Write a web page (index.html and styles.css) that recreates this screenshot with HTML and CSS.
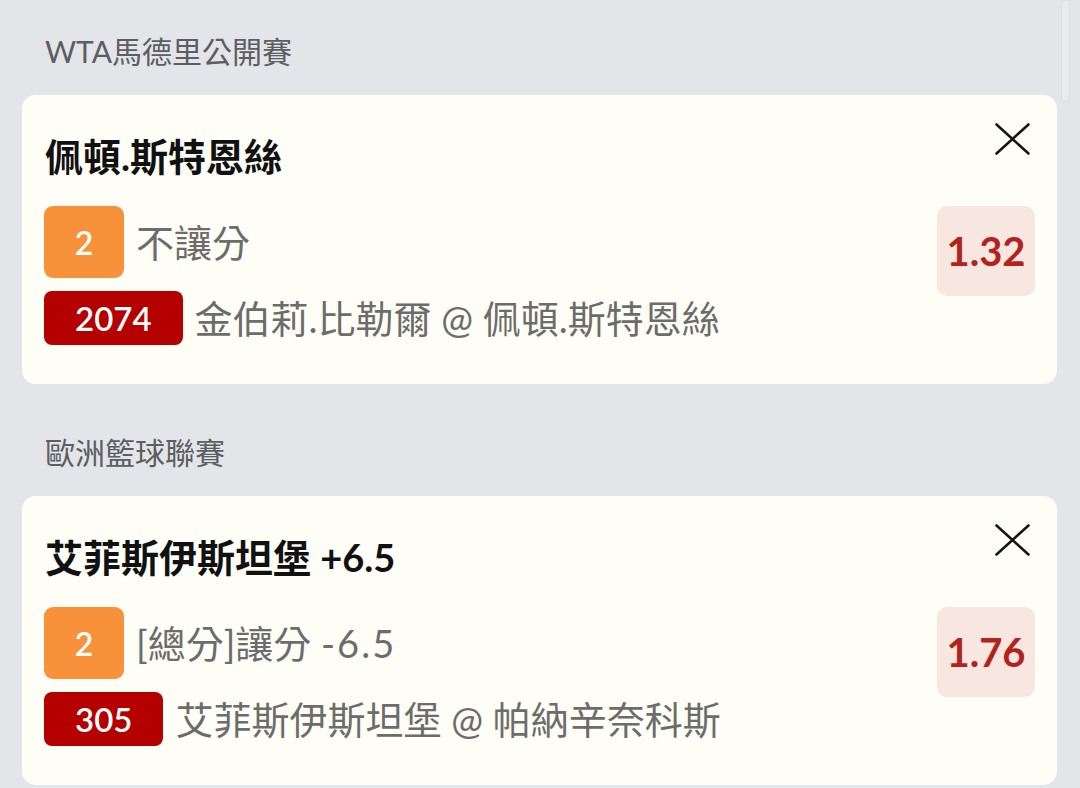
FILE: index.html
```html
<!DOCTYPE html>
<html lang="zh-Hant">
<head>
<meta charset="utf-8">
<title>Bet slip</title>
<link rel="stylesheet" href="styles.css">
</head>
<body>
<div class="page">
  <section class="group">
    <h2 class="league">WTA馬德里公開賽</h2>
    <div class="card">
      <div class="card-head">
        <div class="selection">佩頓.斯特恩絲</div>
        <span class="close" aria-label="close">
          <svg viewBox="0 0 35 32" width="35" height="32"><path d="M1.5 1.5 L33.5 30.5 M33.5 1.5 L1.5 30.5" fill="none" stroke="#151515" stroke-width="2.6" stroke-linecap="round"/></svg>
        </span>
      </div>
      <div class="card-body">
        <div class="details">
          <div class="market"><span class="pos">2</span><span class="market-name">不讓分</span></div>
          <div class="match"><span class="code">2074</span><span class="match-name">金伯莉.比勒爾 @ 佩頓.斯特恩絲</span></div>
        </div>
        <div class="odds">1.32</div>
      </div>
    </div>
  </section>
  <section class="group">
    <h2 class="league">歐洲籃球聯賽</h2>
    <div class="card">
      <div class="card-head">
        <div class="selection">艾菲斯伊斯坦堡 +6.5</div>
        <span class="close" aria-label="close">
          <svg viewBox="0 0 35 32" width="35" height="32"><path d="M1.5 1.5 L33.5 30.5 M33.5 1.5 L1.5 30.5" fill="none" stroke="#151515" stroke-width="2.6" stroke-linecap="round"/></svg>
        </span>
      </div>
      <div class="card-body">
        <div class="details">
          <div class="market"><span class="pos">2</span><span class="market-name">[總分]讓分 <span class="num">-6.5</span></span></div>
          <div class="match"><span class="code">305</span><span class="match-name">艾菲斯伊斯坦堡 @ 帕納辛奈科斯</span></div>
        </div>
        <div class="odds">1.76</div>
      </div>
    </div>
  </section>
  <div class="scroll-thumb"></div>
</div>
</body>
</html>
```

FILE: styles.css
```css
html, body {
  margin: 0;
  padding: 0;
}
body {
  background: #e4e5e8;
  font-family: Lato, "Noto Sans CJK TC", sans-serif;
  height: 788px;
  overflow: hidden;
}
.page {
  position: relative;
  padding: 0 23px 0 22px;
}
.league {
  margin: 0;
  padding: 31px 0 24px 23px;
  font-size: 30px;
  line-height: 40px;
  font-weight: normal;
  color: #5b5e62;
}
.card {
  background: #fffef6;
  border-radius: 14px;
  padding: 28px 22px 39px 22px;
  margin-bottom: 17px;
}
.card-head {
  display: flex;
  justify-content: space-between;
  align-items: flex-start;
}
.selection {
  margin-top: 8px;
  padding-left: 1px;
  font-size: 38px;
  line-height: 50px;
  font-weight: 700;
  color: #111;
}
.close {
  display: block;
  margin-right: 5px;
}
.close svg {
  display: block;
}
.card-body {
  display: flex;
  justify-content: space-between;
  align-items: flex-start;
  margin-top: 25px;
}
.market {
  display: flex;
  align-items: center;
  gap: 12px;
}
.pos {
  width: 80px;
  height: 72px;
  border-radius: 9px;
  background: #f7923a;
  color: #fff;
  font-size: 32px;
  font-weight: 600;
  display: flex;
  align-items: center;
  justify-content: center;
}
.market-name,
.match-name {
  font-size: 38px;
  line-height: 1;
  font-weight: 400;
  color: #6c6c6a;
}
.num {
  letter-spacing: 2px;
}
.match {
  display: flex;
  align-items: center;
  gap: 12px;
  margin-top: 13px;
}
.code {
  height: 54px;
  padding: 0 31px;
  border-radius: 8px;
  background: #b50000;
  color: #fff;
  font-size: 33px;
  font-weight: 600;
  display: flex;
  align-items: center;
}
.odds {
  width: 98px;
  height: 90px;
  border-radius: 10px;
  background: #f8e7e1;
  color: #b3231d;
  font-size: 40px;
  font-weight: 700;
  display: flex;
  align-items: center;
  justify-content: center;
}
.scroll-thumb {
  position: absolute;
  left: 1061px;
  top: 0;
  width: 9px;
  height: 102px;
  border-radius: 0 0 4px 4px;
  background: #e9eaec;
  box-shadow: inset 0 0 0 1px #dcdde0;
}
```
